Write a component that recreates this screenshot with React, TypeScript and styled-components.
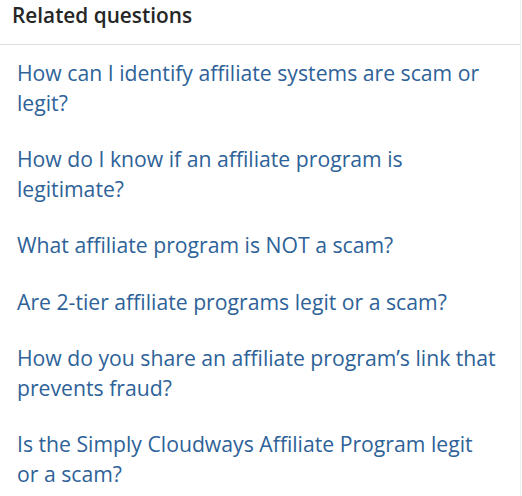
import React from "react";
import styled, { createGlobalStyle } from "styled-components";

const GlobalStyle = createGlobalStyle`
  html, body {
    margin: 0;
    padding: 0;
    background: #ffffff;
  }
  body {
    font-family: "Open Sans", "Noto Sans", sans-serif;
  }
`;

const Panel = styled.section`
  width: 521px;
  height: 496px;
  box-sizing: border-box;
  border-right: 1px solid #efefef;
  background: #ffffff;
  overflow: hidden;
`;

const Header = styled.header`
  padding: 1px 12px 15px;
  border-bottom: 1px solid #dedede;
`;

const Title = styled.h2`
  margin: 0;
  font-family: "Open Sans", "Noto Sans", sans-serif;
  font-size: 20.8px;
  font-weight: 600;
  line-height: 28px;
  color: #262626;
`;

const List = styled.ul`
  list-style: none;
  margin: 0;
  padding: 13px 17px 0;
  display: flex;
  flex-direction: column;
  gap: 27px;
`;

const Item = styled.li`
  margin: 0;
  padding: 0;
`;

const QuestionLink = styled.a`
  display: block;
  font-family: "Open Sans", "Noto Sans", sans-serif;
  font-size: 21.2px;
  font-weight: 400;
  line-height: 29.5px;
  color: #2e6298;
  text-decoration: none;
  max-width: 481px;
`;

const questions = [
  "How can I identify affiliate systems are scam or legit?",
  "How do I know if an affiliate program is legitimate?",
  "What affiliate program is NOT a scam?",
  "Are 2-tier affiliate programs legit or a scam?",
  "How do you share an affiliate program\u2019s link that prevents fraud?",
  "Is the Simply Cloudways Affiliate Program legit or a scam?",
];

export default function App() {
  return (
    <>
      <GlobalStyle />
      <Panel>
        <Header>
          <Title>Related questions</Title>
        </Header>
        <List>
          {questions.map((q) => (
            <Item key={q}>
              <QuestionLink href="#">{q}</QuestionLink>
            </Item>
          ))}
        </List>
      </Panel>
    </>
  );
}
